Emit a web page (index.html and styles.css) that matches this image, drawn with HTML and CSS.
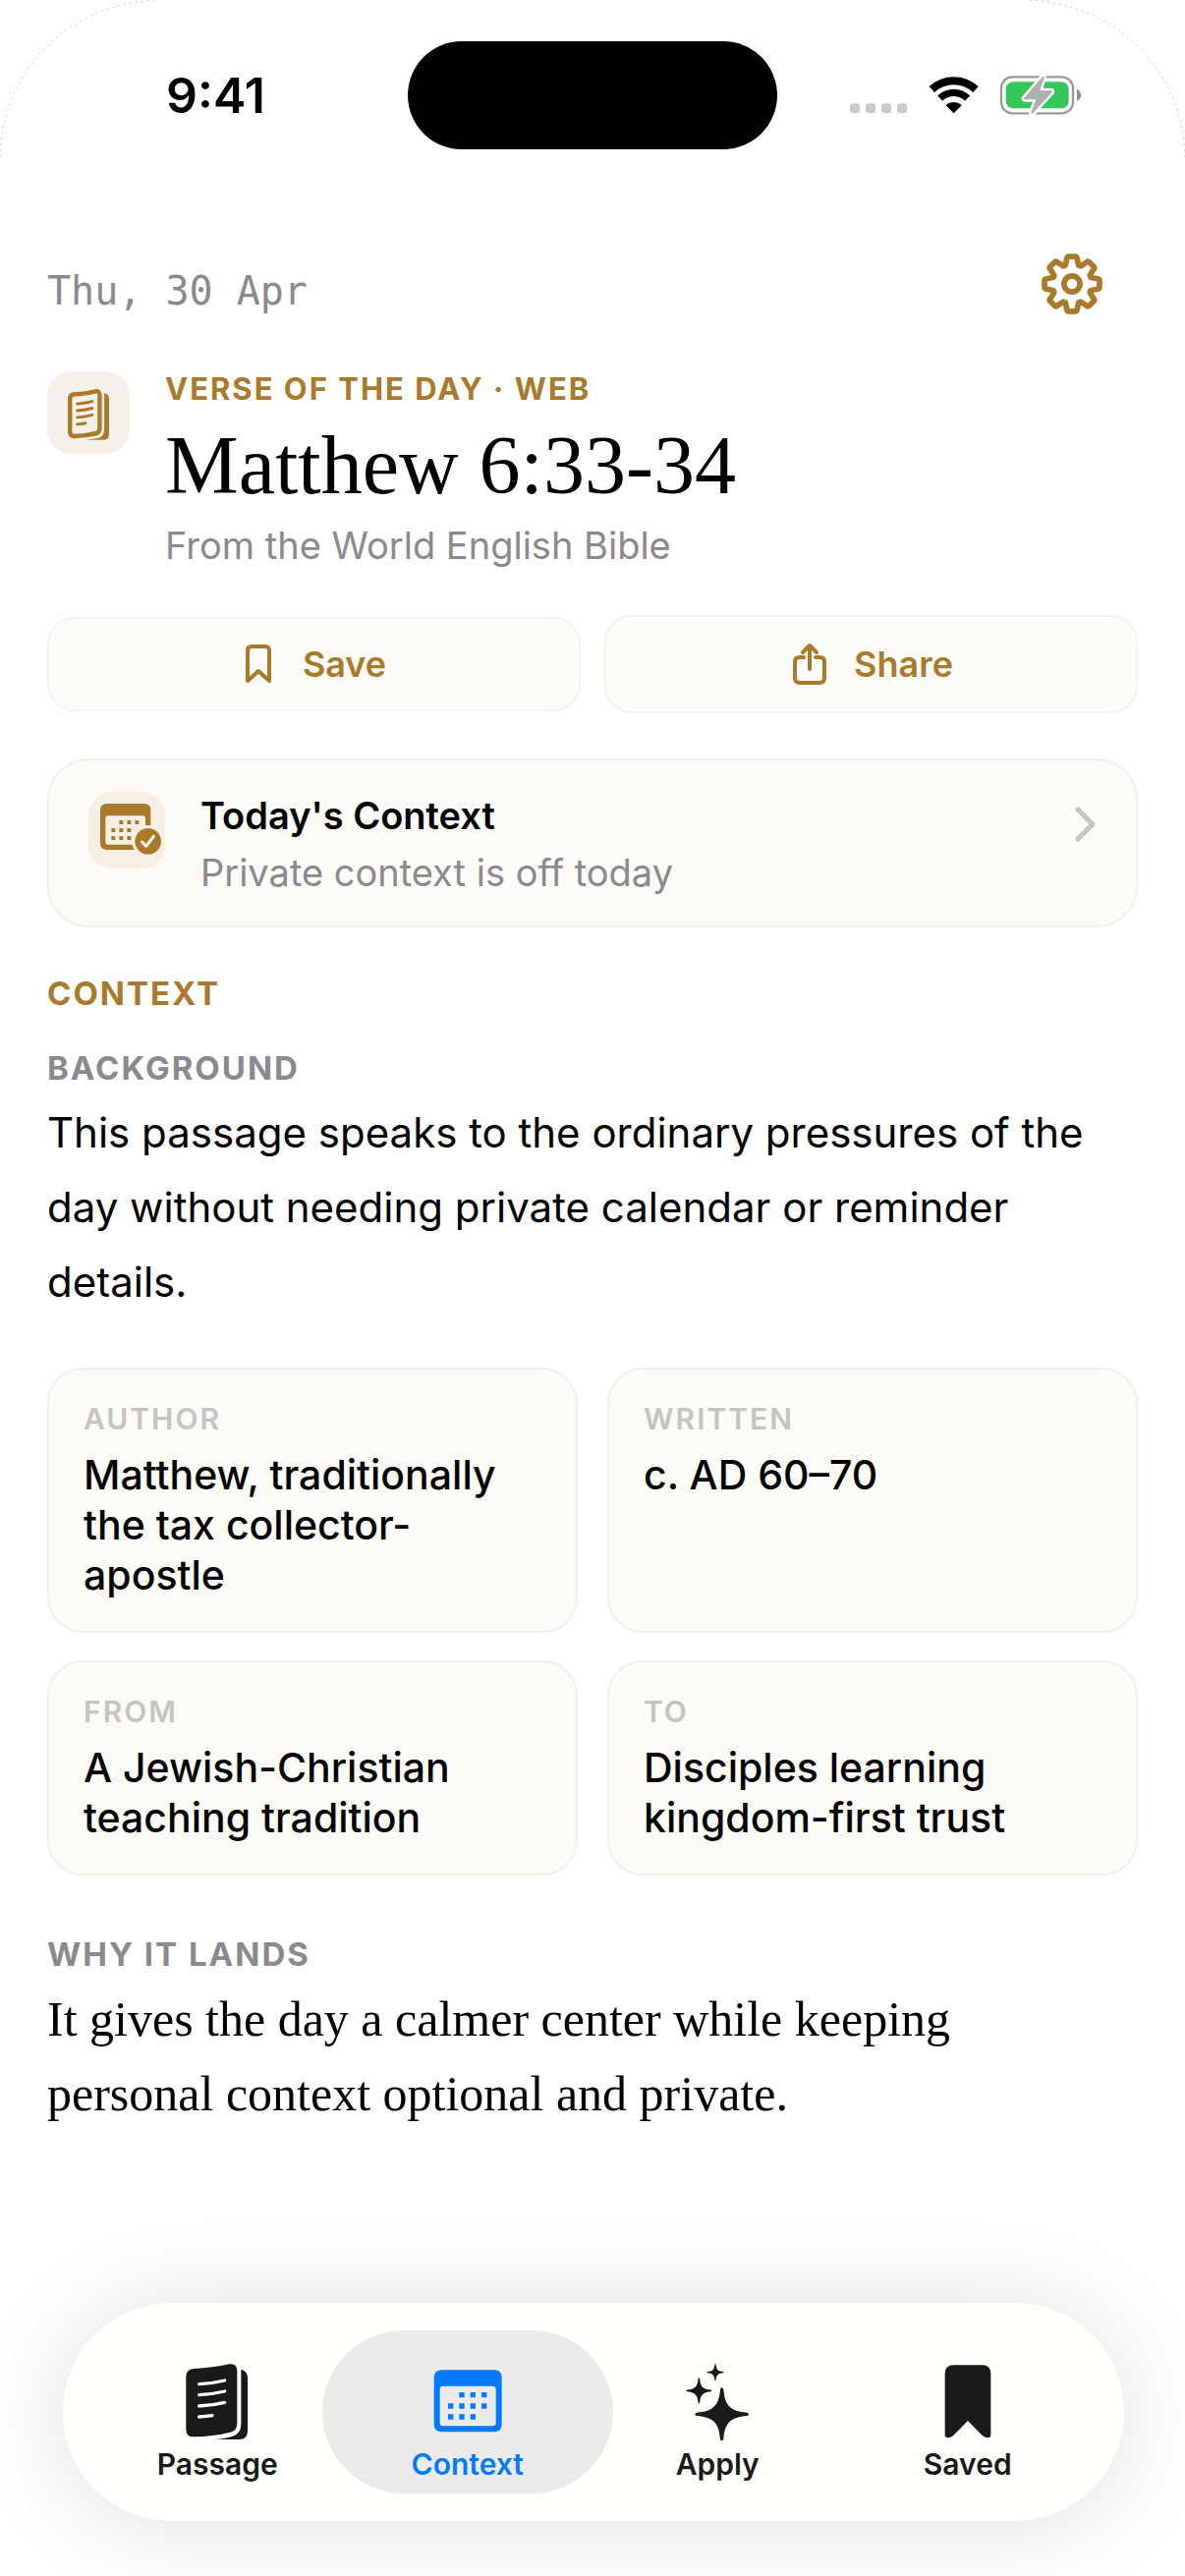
FILE: index.html
```html
<!DOCTYPE html>
<html lang="en">
<head>
    <meta charset="UTF-8">
    <meta name="viewport" content="width=device-width, initial-scale=1.0">
    <title>Verse of the Day</title>
    <link rel="stylesheet" href="styles.css">
</head>
<body>
    <svg class="corner corner-left" viewBox="0 0 160 160" aria-hidden="true"><path d="M0 160C2 70 70 4 160 0"/></svg>
    <svg class="corner corner-right" viewBox="0 0 160 160" aria-hidden="true"><path d="M0 160C2 70 70 4 160 0"/></svg>

    <div class="status-bar">
        <div class="time">9:41</div>
        <div class="island"></div>
        <div class="status-icons">
            <svg width="236" height="40" viewBox="75 53 708 120" aria-hidden="true">
                <g fill="#cbcbcb">
                    <rect x="75" y="138" width="30" height="30" rx="10"/>
                    <rect x="123" y="138" width="30" height="30" rx="10"/>
                    <rect x="171" y="138" width="30" height="30" rx="10"/>
                    <rect x="219" y="138" width="30" height="30" rx="10"/>
                </g>
                <g fill="none" stroke="#000">
                    <path stroke-width="24" d="M325 95A98 98 0 0 1 459 95"/>
                    <path stroke-width="22" d="M350 122A61 61 0 0 1 434 122"/>
                </g>
                <path d="M392 168L368 144A34 34 0 0 1 416 144Z"/>
                <rect x="537" y="57" width="219" height="111" rx="34" fill="none" stroke="#9b9b9b" stroke-width="7"/>
                <rect x="551" y="72" width="192" height="81" rx="22" fill="#34c759"/>
                <path fill="#8f8f8f" d="M768 94Q780 99 780 112Q780 125 768 130Z"/>
                <path fill="#b0b0b0" stroke="#fff" stroke-width="14" stroke-linejoin="round" paint-order="stroke" d="M664 55L606 121Q604 126 610 126L643 126L628 164Q628 172 634 168L692 104Q694 99 688 98L655 98L668 60Q669 53 664 55Z"/>
            </svg>
        </div>
    </div>

    <main>
        <header class="top">
            <div class="date">Thu, 30 Apr</div>
            <button class="settings" type="button" aria-label="Settings">
                <svg width="62" height="62" viewBox="-92 -92 184 184" fill="none" stroke="currentColor" stroke-width="17" stroke-linejoin="round">
                    <path d="M-20-56L-15-79Q-14-83-10-83H10Q14-83 15-79L20-56L26-54L45-66Q49-69 52-66L66-52Q69-49 66-45L54-26L56-20L79-15Q83-14 83-10V10Q83 14 79 15L56 20L54 26L66 45Q69 49 66 52L52 66Q49 69 45 66L26 54L20 56L15 79Q14 83 10 83H-10Q-14 83-15 79L-20 56L-26 54L-45 66Q-49 69-52 66L-66 52Q-69 49-66 45L-54 26L-56 20L-79 15Q-83 14-83 10V-10Q-83-14-79-15L-56-20L-54-26L-66-45Q-69-49-66-52L-52-66Q-49-69-45-66L-26-54Z"/>
                    <circle r="24"/>
                </svg>
            </button>
        </header>

        <section class="verse">
            <div class="verse-icon">
                <svg width="42" height="52" viewBox="123 80 188 232">
                    <path fill="none" stroke="currentColor" stroke-width="20" d="M133 126Q133 107 148 104Q205 101 248 90Q268 87 268 106V258Q268 277 254 281Q205 294 150 294Q133 294 133 276Z"/>
                    <path fill="currentColor" d="M289 97Q311 103 311 122V285Q311 311 285 311H202Q245 308 266 301Q289 292 289 265Z"/>
                    <path fill="none" stroke="currentColor" stroke-width="13" stroke-linecap="round" d="M166 147Q200 145 234 136M166 178Q200 176 234 167M166 209Q200 207 234 198M166 240Q185 239 203 235"/>
                </svg>
            </div>
            <div>
                <p class="label accent">VERSE OF THE DAY · WEB</p>
                <h1>Matthew 6:33-34</h1>
                <p class="source">From the World English Bible</p>
            </div>
        </section>

        <div class="actions">
            <button class="action" type="button">
                <svg width="26" height="40" viewBox="0 0 26 40" fill="none" stroke="currentColor" stroke-width="4" stroke-linejoin="round">
                    <path d="M2 6Q2 2 6 2H20Q24 2 24 6V37L13 27L2 37Z"/>
                </svg>
                Save
            </button>
            <button class="action share" type="button">
                <svg width="34" height="44" viewBox="0 0 34 44" fill="none" stroke="currentColor" stroke-width="4" stroke-linecap="round" stroke-linejoin="round">
                    <path d="M11 15H7Q2 15 2 20V36Q2 41 7 41H27Q32 41 32 36V20Q32 15 27 15H23M17 27V3M10 10L17 3L24 10"/>
                </svg>
                Share
            </button>
        </div>

        <a class="context-card" href="#context">
            <span class="context-icon">
                <svg width="63" height="52" viewBox="186 144 189 156">
                    <path fill="currentColor" fill-rule="evenodd" d="M206 144H320Q340 144 340 164V285H206Q186 285 186 265V164Q186 144 206 144ZM210 181Q202 181 202 189V261Q202 269 210 269H324V189Q324 181 316 181Z"/>
                    <path fill="none" stroke="currentColor" stroke-width="12" stroke-dasharray="12 12" d="M244 201H306M220 225H282M220 249H282"/>
                    <circle cx="332" cy="259" r="49" fill="#f5efe4"/>
                    <circle cx="332" cy="259" r="40" fill="currentColor"/>
                    <path fill="none" stroke="#fdfaf3" stroke-width="9" stroke-linecap="round" stroke-linejoin="round" d="M314 261L326 274L349 244"/>
                </svg>
            </span>
            <span class="context-text">
                <strong>Today's Context</strong>
                <span>Private context is off today</span>
            </span>
            <svg class="chevron" width="22" height="36" viewBox="0 0 22 36" fill="none" stroke="currentColor" stroke-width="5" stroke-linecap="round" stroke-linejoin="round">
                <path d="M3 3L18 18L3 33"/>
            </svg>
        </a>

        <section id="context">
            <h2 class="heading accent">CONTEXT</h2>
            <h3 class="heading background">BACKGROUND</h3>
            <p class="body-text">This passage speaks to the ordinary pressures of the day without needing private calendar or reminder details.</p>

            <dl class="facts">
                <div class="fact">
                    <dt>AUTHOR</dt>
                    <dd>Matthew, traditionally the tax collector-apostle</dd>
                </div>
                <div class="fact">
                    <dt>WRITTEN</dt>
                    <dd>c. AD 60–70</dd>
                </div>
                <div class="fact">
                    <dt>FROM</dt>
                    <dd>A Jewish-Christian teaching tradition</dd>
                </div>
                <div class="fact">
                    <dt>TO</dt>
                    <dd>Disciples learning kingdom-first trust</dd>
                </div>
            </dl>

            <h3 class="heading why">WHY IT LANDS</h3>
            <p class="body-text serif">It gives the day a calmer center while keeping personal context optional and private.</p>
        </section>
    </main>

    <nav class="tab-bar">
        <a class="tab" href="#passage">
            <svg width="64" height="78" viewBox="122 80 192 234">
                <path fill="currentColor" d="M123 120Q123 97 146 95Q205 92 255 81Q279 78 279 102V262Q279 284 258 289Q205 302 148 303Q123 304 123 280Z"/>
                <path fill="currentColor" d="M291 97Q311 103 311 122V285Q311 311 285 311H212Q245 308 266 301Q291 292 291 265Z"/>
                <path fill="none" stroke="#fffffc" stroke-width="10" stroke-linecap="round" d="M163 142Q205 140 241 131M163 175Q205 173 241 164M163 209Q205 207 241 198M163 242Q185 241 203 238"/>
            </svg>
            Passage
        </a>
        <a class="tab active" href="#context">
            <svg width="70" height="78" viewBox="877 80 210 234">
                <path fill="currentColor" fill-rule="evenodd" d="M903 99H1062Q1086 99 1086 123V264Q1086 288 1062 288H903Q879 288 879 264V123Q879 99 903 99ZM907 148Q897 148 897 158V260Q897 270 907 270H1058Q1068 270 1068 260V158Q1068 148 1058 148Z"/>
                <path fill="none" stroke="currentColor" stroke-width="16" stroke-dasharray="16 18" d="M956 175H1042M922 209H1042M922 242H1008"/>
            </svg>
            Context
        </a>
        <a class="tab" href="#apply">
            <svg width="66" height="78" viewBox="110 68 198 234" overflow="visible">
                <defs>
                    <path id="star" d="M-5-76Q0-86 5-76C9-26 26-9 77-5Q87 0 77 5C26 9 9 26 5 76Q0 86-5 76C-9 26-26 9-77 5Q-87 0-77-5C-26-9-9-26-5-76Z"/>
                </defs>
                <g fill="currentColor">
                    <use href="#star" transform="translate(223 222)"/>
                    <use href="#star" transform="translate(153 150) scale(.48)"/>
                    <use href="#star" transform="translate(203 94) scale(.32)"/>
                </g>
            </svg>
            Apply
        </a>
        <a class="tab" href="#saved">
            <svg width="48" height="78" viewBox="901 80 144 234">
                <path fill="currentColor" d="M903 110Q903 84 930 84H1017Q1043 84 1043 110V296Q1043 306 1033 306Q1026 306 1018 300L973 254L928 300Q920 306 913 306Q903 306 903 296Z"/>
            </svg>
            Saved
        </a>
    </nav>
</body>
</html>
```

FILE: styles.css
```css
* {
    box-sizing: border-box;
}

body {
    font-family: Inter, Roboto, sans-serif;
    background-color: #fff;
    color: #000;
    display: flex;
    flex-direction: column;
    min-height: 100vh;
    margin: 0;
}

h1, h2, h3, p, dl, dd {
    margin: 0;
}

a {
    color: inherit;
    text-decoration: none;
}

button {
    font: inherit;
    cursor: pointer;
}

svg {
    display: block;
    flex: none;
}

/* faint outline of the rounded screen */
.corner {
    position: absolute;
    top: 0;
    width: 160px;
    height: 160px;
    fill: none;
    stroke: #c8c8c8;
    stroke-dasharray: 2 4;
}

.corner-left {
    left: 0;
}

.corner-right {
    right: 0;
    transform: scaleX(-1);
}

.status-bar {
    display: grid;
    grid-template-columns: 1fr 376px 1fr;
    align-items: center;
    padding-top: 42px;
}

.time {
    padding-left: 24px;
    font-size: 50px;
    font-weight: 600;
    line-height: 64px;
    text-align: center;
}

.island {
    height: 110px;
    border-radius: 55px;
    background-color: #000;
}

.status-icons {
    display: flex;
    justify-content: center;
    padding-right: 32px;
}

main {
    padding: 106px 48px 48px;
}

.top {
    display: flex;
    justify-content: space-between;
    align-items: flex-end;
    padding-right: 36px;
}

.date {
    font-family: "DejaVu Sans Mono", monospace;
    font-size: 40px;
    line-height: 48px;
    color: #8a8a8e;
}

.settings {
    padding: 0;
    border: none;
    background: none;
    color: #a97a2b;
}

.verse {
    display: flex;
    gap: 36px;
    margin-top: 58px;
}

.verse-icon {
    display: flex;
    align-items: center;
    justify-content: center;
    flex: none;
    width: 84px;
    height: 84px;
    padding-top: 4px;
    border-radius: 24px;
    background-color: #f5f0e9;
    color: #a97a2b;
}

.label {
    font-size: 31px;
    font-weight: 700;
    line-height: 36px;
    letter-spacing: 2px;
}

.accent {
    color: #a97a2b;
}

h1 {
    margin-top: 10px;
    font-family: "Liberation Serif", serif;
    font-size: 84px;
    font-weight: 400;
    line-height: 100px;
}

.source {
    margin-top: 7px;
    font-size: 38px;
    line-height: 48px;
    color: #8a8a8e;
}

.actions {
    display: flex;
    align-items: center;
    gap: 24px;
    margin-top: 47px;
}

.action {
    display: flex;
    align-items: center;
    justify-content: center;
    gap: 32px;
    flex: 1;
    height: 96px;
    padding: 0 0 0 4px;
    border: 2px solid #f3f2ef;
    border-radius: 28px;
    background-color: #fdfcf8;
    color: #a97a2b;
    font-size: 36px;
    font-weight: 600;
}

.share {
    height: 100px;
    gap: 28px;
}

.context-card {
    display: flex;
    align-items: flex-start;
    gap: 36px;
    margin-top: 46px;
    padding: 32px 40px 30px;
    border: 2px solid #f1f0ed;
    border-radius: 42px;
    background-color: #fcfbf6;
}

.context-icon {
    display: flex;
    padding: 12px 3px 14px 12px;
    border-radius: 24px;
    background-color: #f5efe4;
    color: #a97a2b;
}

.context-text {
    display: flex;
    flex-direction: column;
    gap: 10px;
    flex: 1;
    font-size: 38px;
    line-height: 48px;
    color: #8a8a8e;
}

.context-text strong {
    font-weight: 600;
    color: #000;
}

.chevron {
    margin-top: 15px;
    color: #c4c4c2;
}

.heading {
    font-size: 33px;
    font-weight: 700;
    line-height: 40px;
    letter-spacing: 2px;
}

h2.heading {
    margin-top: 47px;
}

h3.heading {
    color: #8a8a8e;
}

.background {
    margin-top: 36px;
}

.why {
    margin-top: 60px;
}

.body-text {
    margin-top: 8px;
    font-size: 42px;
    line-height: 76px;
}

.serif {
    padding-right: 80px;
    font-family: "Liberation Serif", serif;
    font-size: 50px;
}

.facts {
    display: grid;
    grid-template-columns: 1fr 1fr;
    gap: 28px 30px;
    margin-top: 49px;
}

.fact {
    padding: 32px 35px 31px;
    border: 2px solid #f1f0ed;
    border-radius: 36px;
    background-color: #fcfbf6;
}

.fact dt {
    font-size: 30px;
    font-weight: 600;
    line-height: 36px;
    letter-spacing: 2px;
    color: #c4c4c2;
}

.fact dd {
    margin-top: 14px;
    font-size: 41px;
    font-weight: 500;
    line-height: 51px;
}

.tab-bar {
    position: sticky;
    bottom: 56px;
    display: flex;
    margin: auto 62px 56px 64px;
    padding: 28px 32px 28px 30px;
    border-radius: 111px;
    background-color: #fffffc;
    box-shadow: 0 4px 100px rgba(0, 0, 0, 0.12);
}

.tab {
    position: relative;
    display: flex;
    flex-direction: column;
    align-items: center;
    gap: 6px;
    flex: 1;
    padding: 34px 0 12px;
    color: #191919;
    font-size: 30px;
    font-weight: 600;
    line-height: 36px;
}

/* highlight is wider than the tab itself */
.active::before {
    content: "";
    position: absolute;
    inset: 0 -21px;
    z-index: -1;
    border-radius: 83px;
    background-color: #ebebeb;
}

.active {
    z-index: 1;
    color: #007aff;
}
```
